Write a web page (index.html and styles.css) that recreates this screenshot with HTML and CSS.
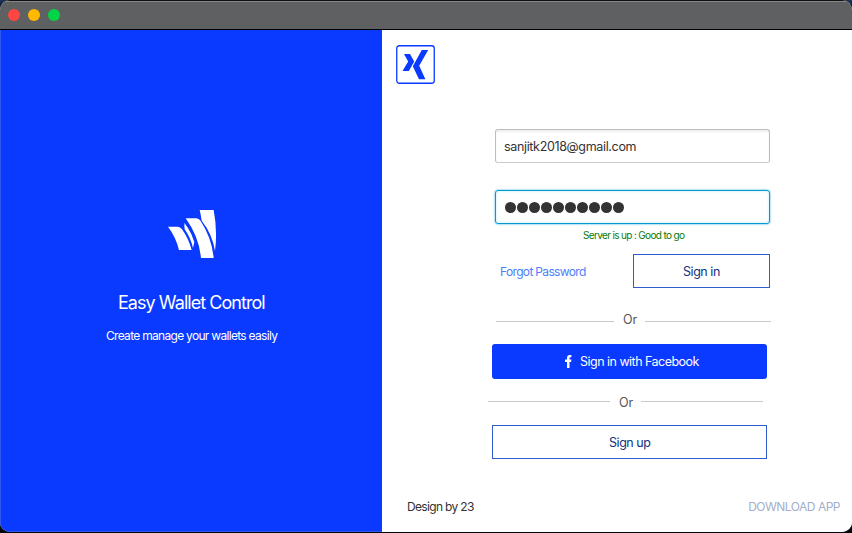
FILE: index.html
```html
<!DOCTYPE html>
<html lang="en">
<head>
<meta charset="utf-8">
<title>Easy Wallet Control</title>
<link rel="stylesheet" href="styles.css">
</head>
<body>
<div class="window">
  <header class="titlebar">
    <span class="dot close"></span><span class="dot minimize"></span><span class="dot maximize"></span>
  </header>
  <div class="content">
    <aside class="brand">
      <svg class="wallet" width="49" height="49" viewBox="0 0 147 147" fill="#fff">
        <path d="M0 50H29Q37 51 42 58Q61 84 71 120H33Q23 80 0 50Z"/>
        <path d="M50 38Q52 44 58 51Q72 72 79 96L75 114Q68 84 50 58Q48 47 50 38Z"/>
        <path d="M53 25H85Q93 26 98 33Q131 83 137 144H99Q93 80 53 25Z"/>
        <path d="M95 0H137Q149 62 141 123Q133 72 101 32Q99 16 95 0Z"/>
      </svg>
      <h1><span class="t-title">Easy Wallet Control</span></h1>
      <p><span class="t-sub">Create manage your wallets easily</span></p>
    </aside>
    <main class="panel">
      <svg class="logo" width="39" height="39" viewBox="0 0 39 39">
        <rect x=".75" y=".75" width="37.5" height="37.5" rx="2.5" fill="#fff" stroke="#0a39ff" stroke-width="1.3"/>
        <path fill="#0a39ff" d="M8 9H14L18.2 16.5L12.8 26H6.5L12.2 16.5ZM25.8 5H32.2L23.2 20.8L29.4 34.3H23L16.8 21.2Z"/>
      </svg>
      <form class="form">
        <div class="field"><span class="t-mail">sanjitk2018@gmail.com</span></div>
        <div class="field focused"><i></i><i></i><i></i><i></i><i></i><i></i><i></i><i></i><i></i><i></i></div>
        <div class="status"><span class="t-status">Server is up : Good to go</span></div>
        <div class="actions"><a class="t-forgot">Forgot Password</a><div class="button signin"><span class="t-signin">Sign in</span></div></div>
        <div class="divider first"><hr><span class="t-or">Or</span><hr></div>
        <div class="button facebook">
          <svg width="7" height="13" viewBox="0 0 7 13"><path fill="#fff" d="M2 13V7H0V4.6H2V3Q2 0 4.8 0H6.4V2.3H5.4Q4.5 2.3 4.5 3.3V4.6H6.4L6.1 7H4.5V13Z"/></svg>
          <span class="t-facebook">Sign in with Facebook</span>
        </div>
        <div class="divider second"><hr><span class="t-or">Or</span><hr></div>
        <div class="button signup"><span class="t-signup">Sign up</span></div>
      </form>
      <footer><span class="t-design">Design by 23</span><a class="t-download">DOWNLOAD APP</a></footer>
    </main>
  </div>
</div>
</body>
</html>
```
FILE: styles.css
```css
* { box-sizing: border-box; }
body { margin: 0; width: 852px; height: 533px; overflow: hidden; background: linear-gradient(#1d355b, #02050a 12px); font: 12.5px/16px Inter, sans-serif; color: #333; }
span, a { white-space: nowrap; }
.window { height: 532px; border-radius: 10px; overflow: hidden; background: #fff; display: flex; flex-direction: column; }
.titlebar { height: 30px; flex: none; background: #5f6062; border-top: 1px solid #111; border-bottom: 1px solid #000; box-shadow: inset 0 1px #858688; display: flex; align-items: center; gap: 8px; padding-left: 8px; }
.dot { width: 12px; height: 12px; border-radius: 50%; }
.close { background: #ff4642; }
.minimize { background: #ffb900; }
.maximize { background: #00d645; }
.content { flex: 1; display: flex; }
.brand { width: 382px; background: #0a39ff; border-left: 1px solid #3258e8; border-bottom: 1px solid #3258e8; color: #fff; padding-top: 180px; }
.wallet { display: block; margin-left: 167px; }
h1 { margin: 32px 0 0 117px; font: 400 18px/24px Inter, sans-serif; }
.brand p { margin: 13px 0 0 105px; font-size: 12px; }
.panel { flex: 1; min-width: 0; background: #fff; padding-top: 15px; display: flex; flex-direction: column; }
.logo { display: block; margin-left: 14px; }
.form { width: 284px; margin: 45px 0 0 106px; }
.field { width: 275px; height: 34px; margin-left: 7px; border: 1px solid #bdbdbd; border-bottom-color: #ccc; border-radius: 3px; padding-left: 8px; display: flex; align-items: center; box-shadow: inset 0 2px 2px #f0f0f0; }
.field span { padding-top: 2px; }
.focused { margin-top: 27px; border: 1px solid #0798ce; box-shadow: 0 0 2px #079bd2, inset 0 0 3px #bceafa; padding-left: 9px; gap: 1px; }
.focused i { width: 11px; height: 11px; border-radius: 50%; background: #333; }
.status { margin: 4px 0 0 95px; height: 15px; color: #087b08; font-size: 10px; line-height: 15px; }
.actions { display: flex; justify-content: space-between; align-items: center; width: 270px; margin: 11px 0 0 12px; color: #4c80f8; font-size: 12px; }
.actions a { padding-top: 2px; }
.button { height: 34px; border: 1px solid #315bd0; display: flex; align-items: center; color: #12327f; }
.signin { width: 137px; padding-left: 49px; font-size: 12.5px; }
.signin span, .signup span { padding-top: 2px; }
.divider { display: flex; align-items: center; color: #555; }
.divider hr { margin: 0; height: 1px; border: 0; background: #c9c9c9; }
.divider span { width: 14px; margin: 0 8px 0 9px; }
.first { margin: 24px 0 0 8px; }
.first hr { width: 118px; margin-top: 2px; }
.first hr:last-child { width: 126px; }
.facebook { height: 35px; width: 275px; margin: 16px 0 0 4px; border: 0; border-radius: 3px; background: #0a39ff; color: #fff; padding-left: 73px; gap: 8px; }
.second { margin-top: 16px; }
.second hr { width: 122px; margin-top: -3px; }
.signup { width: 275px; margin: 14px 0 0 4px; padding-left: 116px; }
footer { margin: auto 12px 17px 25px; display: flex; justify-content: space-between; }
footer a { color: #a4aecb; }
.t-title { letter-spacing: -.95px; font-size: 18px; }
.t-sub { letter-spacing: -.7px; }
.t-mail { letter-spacing: -.34px; }
.t-status { letter-spacing: -.65px; }
.t-forgot { letter-spacing: -.66px; }
.t-signin, .t-signup { letter-spacing: -.45px; }
.t-facebook { letter-spacing: -.52px; }
.t-design { font-size: 12px; letter-spacing: -.67px; }
.t-download { font-size: 12px; letter-spacing: -.5px; }
```
